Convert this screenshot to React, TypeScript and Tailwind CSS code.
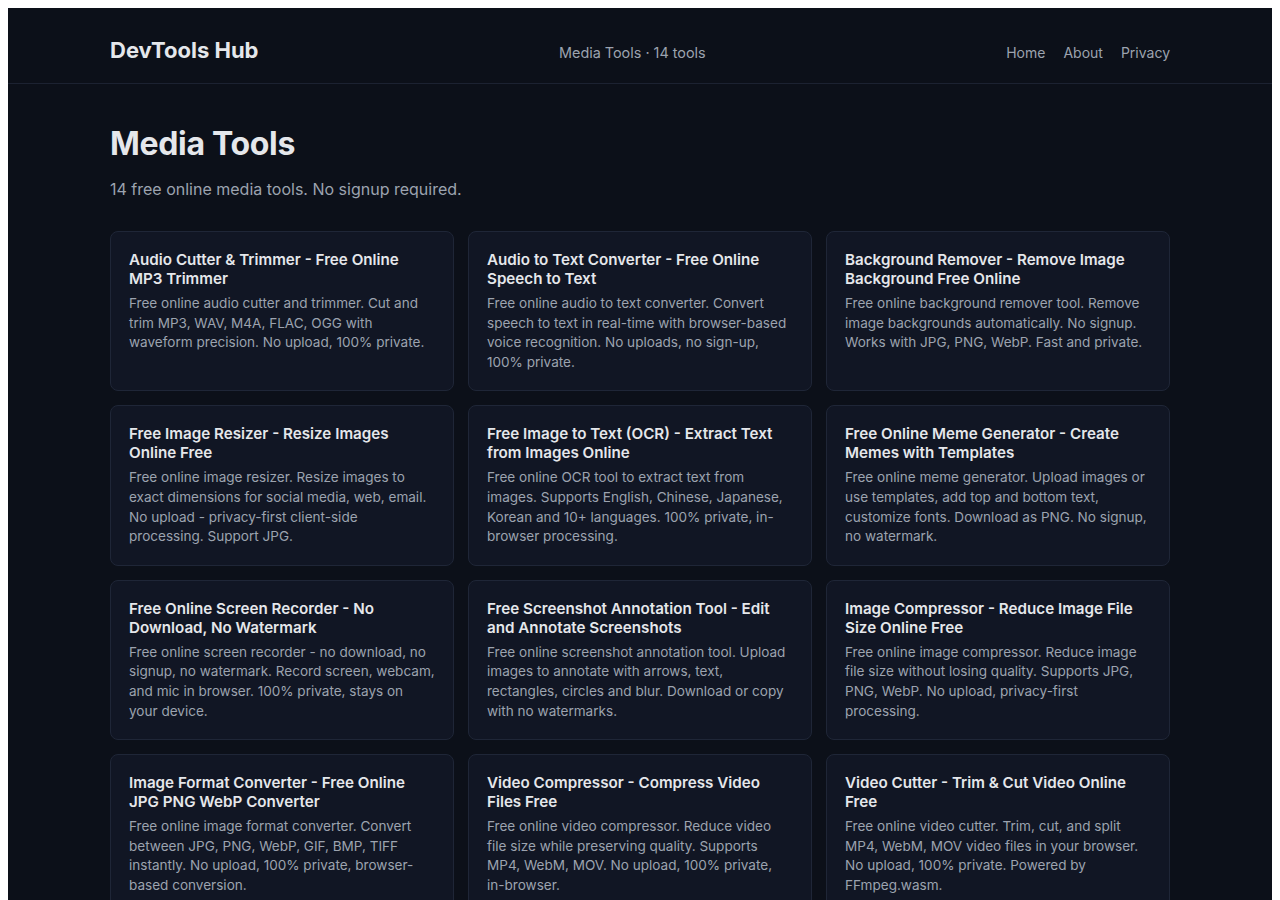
const tools = [
  {
    title: 'Audio Cutter & Trimmer - Free Online MP3 Trimmer',
    desc: 'Free online audio cutter and trimmer. Cut and trim MP3, WAV, M4A, FLAC, OGG with waveform precision. No upload, 100% private.',
  },
  {
    title: 'Audio to Text Converter - Free Online Speech to Text',
    desc: 'Free online audio to text converter. Convert speech to text in real-time with browser-based voice recognition. No uploads, no sign-up, 100% private.',
  },
  {
    title: 'Background Remover - Remove Image Background Free Online',
    desc: 'Free online background remover tool. Remove image backgrounds automatically. No signup. Works with JPG, PNG, WebP. Fast and private.',
  },
  {
    title: 'Free Image Resizer - Resize Images Online Free',
    desc: 'Free online image resizer. Resize images to exact dimensions for social media, web, email. No upload - privacy-first client-side processing. Support JPG.',
  },
  {
    title: 'Free Image to Text (OCR) - Extract Text from Images Online',
    desc: 'Free online OCR tool to extract text from images. Supports English, Chinese, Japanese, Korean and 10+ languages. 100% private, in-browser processing.',
  },
  {
    title: 'Free Online Meme Generator - Create Memes with Templates',
    desc: 'Free online meme generator. Upload images or use templates, add top and bottom text, customize fonts. Download as PNG. No signup, no watermark.',
  },
  {
    title: 'Free Online Screen Recorder - No Download, No Watermark',
    desc: 'Free online screen recorder - no download, no signup, no watermark. Record screen, webcam, and mic in browser. 100% private, stays on your device.',
  },
  {
    title: 'Free Screenshot Annotation Tool - Edit and Annotate Screenshots',
    desc: 'Free online screenshot annotation tool. Upload images to annotate with arrows, text, rectangles, circles and blur. Download or copy with no watermarks.',
  },
  {
    title: 'Image Compressor - Reduce Image File Size Online Free',
    desc: 'Free online image compressor. Reduce image file size without losing quality. Supports JPG, PNG, WebP. No upload, privacy-first processing.',
  },
  {
    title: 'Image Format Converter - Free Online JPG PNG WebP Converter',
    desc: 'Free online image format converter. Convert between JPG, PNG, WebP, GIF, BMP, TIFF instantly. No upload, 100% private, browser-based conversion.',
  },
  {
    title: 'Video Compressor - Compress Video Files Free',
    desc: 'Free online video compressor. Reduce video file size while preserving quality. Supports MP4, WebM, MOV. No upload, 100% private, in-browser.',
  },
  {
    title: 'Video Cutter - Trim & Cut Video Online Free',
    desc: 'Free online video cutter. Trim, cut, and split MP4, WebM, MOV video files in your browser. No upload, 100% private. Powered by FFmpeg.wasm.',
  },
  {
    title: 'Video to GIF Converter - Free Online GIF Maker',
    desc: 'Free online video to GIF converter. Turn MP4, WebM, MOV clips into animated GIFs. No upload, 100% private, in-browser.',
  },
  {
    title: 'Webcam Test - Check Your Camera Online',
    desc: 'Free online webcam test. Check camera resolution, frame rate and microphone right in your browser. Nothing is recorded or uploaded.',
  },
]

function ToolCard({ title, desc }: { title: string; desc: string }) {
  return (
    <a
      href="#"
      className="block rounded-lg border border-[#1f2637] bg-[#111624] p-[18px] transition-colors hover:border-[#2d3648]"
    >
      <h3 className="text-[15.2px] font-semibold leading-[19px] text-[#e5e7eb]">{title}</h3>
      <p className="mt-[6px] text-[13.55px] leading-[19.6px] text-[#9ca3af]">{desc}</p>
    </a>
  )
}

export default function App() {
  return (
    <div className="min-h-screen bg-white px-2 pt-2 font-['Inter','Noto_Sans',sans-serif]">
      <div className="min-h-[892px] bg-[#0c1019] antialiased">
        {/* top bar */}
        <header className="h-[76px] border-b border-[#1c2231]">
          <div className="mx-auto flex max-w-[1060px] items-baseline justify-between pt-[28px]">
            <a href="#" className="text-[22px] font-bold leading-[28px] text-[#e5e7eb]">
              DevTools Hub
            </a>
            <span className="text-[14.4px] leading-5 text-[#9ca3af]">Media Tools · 14 tools</span>
            <nav className="flex gap-[18px] text-[14px] leading-5 text-[#9ca3af]">
              <a href="#">Home</a>
              <a href="#">About</a>
              <a href="#">Privacy</a>
            </nav>
          </div>
        </header>

        <main className="mx-auto max-w-[1060px] pt-[40px] pb-10">
          <h1 className="text-[32px] font-bold leading-10 tracking-[-0.01em] text-[#e5e7eb]">Media Tools</h1>
          <p className="mt-[13px] text-[16px] leading-6 text-[#9ca3af]">
            14 free online media tools. No signup required.
          </p>

          <div className="mt-[30px] grid grid-cols-3 gap-[14px]">
            {tools.map((t) => (
              <ToolCard key={t.title} title={t.title} desc={t.desc} />
            ))}
          </div>
        </main>
      </div>
    </div>
  )
}
